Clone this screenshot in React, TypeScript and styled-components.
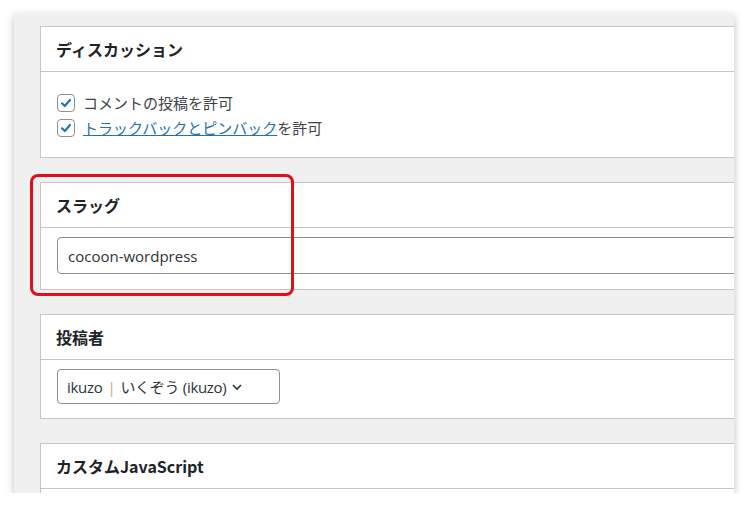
import React from "react";
import styled, { createGlobalStyle } from "styled-components";

const Global = createGlobalStyle`
  html, body { margin: 0; background: #fff; }
  body { font-family: "Noto Sans CJK JP", "Noto Sans", sans-serif; color: #1d2327; }
`;

const Frame = styled.div`
  position: relative;
  margin: 13px 14px 0 14px;
  width: 720px;
  height: 480px;
  background: #f0f0f1;
  overflow: hidden;
  box-shadow: 0 3px 8px rgba(0,0,0,0.25);
  padding: 13px 0 0 26px;
  box-sizing: border-box;
  display: flex;
  flex-direction: column;
  gap: 24px;
`;

const Panel = styled.div`
  width: 720px;
  background: #fff;
  border: 1px solid #c3c4c7;
  flex-shrink: 0;
`;

const Header = styled.div`
  height: 44px;
  display: flex;
  align-items: center;
  padding-left: 15px;
  font-size: 16px;
  font-weight: 700;
  border-bottom: 1px solid #c3c4c7;
`;

const Body = styled.div<{ $pad: string }>`
  padding: ${(p) => p.$pad};
`;

const Row = styled.label`
  display: flex;
  align-items: center;
  gap: 8px;
  font-size: 15px;
  height: 25px;
  color: #3c434a;
`;

const Box = styled.span`
  width: 16px;
  height: 16px;
  border: 1px solid #8c8f94;
  border-radius: 4px;
  display: flex;
  align-items: center;
  justify-content: center;
`;

const Link = styled.a`
  color: #2271b1;
  text-decoration: underline;
`;

const Input = styled.div`
  height: 35px;
  border: 1px solid #8c8f94;
  border-radius: 4px;
  display: flex;
  align-items: center;
  padding-left: 10px;
  font-family: "Open Sans", "Noto Sans CJK JP", sans-serif;
  font-size: 15px;
  color: #2c3338;
`;

const Select = styled(Input)`
  width: 223px;
  box-sizing: border-box;
  padding-left: 9px;
  gap: 5px;
  font-size: 15px;
  letter-spacing: -0.3px;
`;

const Sep = styled.span`
  color: #c6a676;
`;

const Highlight = styled.div`
  position: absolute;
  left: 16px;
  top: 161px;
  width: 258px;
  height: 116px;
  border: 3px solid #e0101a;
  border-radius: 8px;
`;

const Check = () => (
  <Box>
    <svg width="12" height="12" viewBox="0 0 12 12">
      <path d="M2 6.3 L4.8 9 L10 3" fill="none" stroke="#2271b1" strokeWidth="2.2" strokeLinecap="round" strokeLinejoin="round" />
    </svg>
  </Box>
);

export default function App() {
  return (
    <>
      <Global />
      <Frame>
        <Panel>
          <Header>ディスカッション</Header>
          <Body $pad="18px 16px 17px">
            <Row><Check />コメントの投稿を許可</Row>
            <Row><Check /><span><Link>トラックバックとピンバック</Link>を許可</span></Row>
          </Body>
        </Panel>
        <Panel>
          <Header>スラッグ</Header>
          <Body $pad="9px 0 15px 16px">
            <Input>cocoon-wordpress</Input>
          </Body>
        </Panel>
        <Panel>
          <Header>投稿者</Header>
          <Body $pad="9px 0 14px 16px">
            <Select>
              <span>ikuzo</span><Sep>|</Sep><span>いくぞう (ikuzo)</span>
              <svg width="12" height="12" viewBox="0 0 12 12"><path d="M2 4 L6 8 L10 4" fill="none" stroke="#2c3338" strokeWidth="1.6" /></svg>
            </Select>
          </Body>
        </Panel>
        <Panel>
          <Header>カスタムJavaScript</Header>
          <Body $pad="20px" />
        </Panel>
        <Highlight />
      </Frame>
    </>
  );
}
